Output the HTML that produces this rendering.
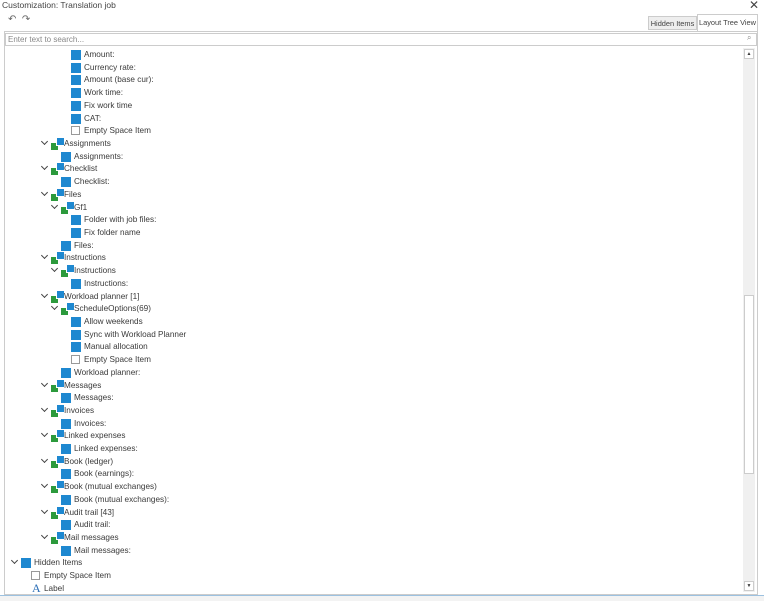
<!DOCTYPE html><html><head><style>
body{margin:0;width:764px;height:600px;background:#fff;font-family:"Liberation Sans",sans-serif;font-size:8.2px;color:#3a3a3a;position:relative;overflow:hidden}
.a{position:absolute;white-space:nowrap}
.r{position:absolute;height:12px;line-height:12px;white-space:nowrap}
.b{position:absolute;width:10px;height:10px;background:#1e88d0;top:1px}
.e{position:absolute;width:9px;height:9px;border:1px solid #999;background:#fff;top:1px;box-sizing:border-box}
.g{position:absolute;width:12px;height:12px;top:0}
.g i{position:absolute;width:7px;height:7px;background:#2c9a3c;left:0;top:5px}
.g s{position:absolute;width:7px;height:7px;background:#1e88d0;left:5px;top:0;border-left:1px solid #fff;border-bottom:1px solid #fff}
.c{position:absolute;top:1px;width:4px;height:4px;border-right:1.2px solid #444;border-bottom:1.2px solid #444;transform:rotate(45deg)}
</style></head><body>
<div class="a" style="left:2px;top:0;font-size:8.5px;color:#444">Customization: Translation job</div>
<div class="a" style="left:749px;top:-2px;font-size:12px;color:#444">✕</div>
<div class="a" style="left:8px;top:14px;font-size:10px;color:#666">↶ &nbsp;↷</div>
<div class="a" style="left:648px;top:16px;width:49px;height:14px;background:#eee;border:1px solid #ccc;box-sizing:border-box;font-size:7.4px;line-height:13px;text-align:center;color:#444;overflow:hidden">Hidden Items</div>
<div class="a" style="left:697px;top:14px;width:61px;height:17px;background:#fff;border:1px solid #ccc;border-bottom:none;box-sizing:border-box;font-size:7.4px;line-height:15px;text-align:center;color:#444;overflow:hidden">Layout Tree View</div>
<div class="a" style="left:4px;top:31px;width:754px;height:564px;border:1px solid #ccc;box-sizing:border-box"></div>
<div class="a" style="left:5px;top:33px;width:752px;height:13px;border:1px solid #ccc;box-sizing:border-box;color:#888;font-size:8px;line-height:11px;padding-left:2px">Enter text to search...</div>
<div class="a" style="left:747px;top:33px;font-size:8px;color:#888">⌕</div>
<div class="a" style="left:743px;top:48px;width:12px;height:544px;background:#f0f0f0"></div>
<div class="a" style="left:744px;top:49px;width:10px;height:10px;border:1px solid #ccc;background:#fff;box-sizing:border-box;font-size:5px;text-align:center;line-height:8px">▲</div>
<div class="a" style="left:744px;top:295px;width:10px;height:179px;border:1px solid #ccc;background:#fff;box-sizing:border-box"></div>
<div class="a" style="left:744px;top:581px;width:10px;height:10px;border:1px solid #ccc;background:#fff;box-sizing:border-box;font-size:5px;text-align:center;line-height:8px">▼</div>
<div class="a" style="left:0;top:595px;width:764px;height:5px;border-top:1px solid #9cc1e0;background:#f3f3f3"></div>
<div id="t"></div>
<script>
var rows=[
["L3","Amount:"],["L3","Currency rate:"],["L3","Amount (base cur):"],["L3","Work time:"],["L3","Fix work time"],["L3","CAT:"],["E3","Empty Space Item"],
["G","Assignments"],["L2","Assignments:"],["G","Checklist"],["L2","Checklist:"],["G","Files"],["S","Gf1"],["L3","Folder with job files:"],["L3","Fix folder name"],["L2","Files:"],
["G","Instructions"],["S","Instructions"],["L3","Instructions:"],["G","Workload planner [1]"],["S","ScheduleOptions(69)"],["L3","Allow weekends"],["L3","Sync with Workload Planner"],["L3","Manual allocation"],["E3","Empty Space Item"],["L2","Workload planner:"],
["G","Messages"],["L2","Messages:"],["G","Invoices"],["L2","Invoices:"],["G","Linked expenses"],["L2","Linked expenses:"],["G","Book (ledger)"],["L2","Book (earnings):"],["G","Book (mutual exchanges)"],["L2","Book (mutual exchanges):"],["G","Audit trail [43]"],["L2","Audit trail:"],["G","Mail messages"],["L2","Mail messages:"],
["H","Hidden Items"],["E0","Empty Space Item"],["A","Label"]];
var h="";
rows.forEach(function(r,i){var y=(49+i*12.71).toFixed(1),t=r[0],ic="",tx;
if(t=="L3"){ic='<div class="b" style="left:71px"></div>';tx=84}
else if(t=="L2"){ic='<div class="b" style="left:61px"></div>';tx=74}
else if(t=="E3"){ic='<div class="e" style="left:71px"></div>';tx=84}
else if(t=="E0"){ic='<div class="e" style="left:31px"></div>';tx=44}
else if(t=="G"){ic='<div class="c" style="left:42px"></div><div class="g" style="left:51px"><i></i><s></s></div>';tx=64}
else if(t=="S"){ic='<div class="c" style="left:52px"></div><div class="g" style="left:61px"><i></i><s></s></div>';tx=74}
else if(t=="H"){ic='<div class="c" style="left:12px"></div><div class="b" style="left:21px"></div>';tx=34}
else if(t=="A"){ic='<div class="a" style="left:32px;top:-1px;font-family:Liberation Serif,serif;font-size:12px;color:#2a6db5">A</div>';tx=44}
h+='<div class="r" style="left:0;top:'+y+'px;width:740px">'+ic+'<span class="a" style="left:'+tx+'px">'+r[1]+'</span></div>';});
document.getElementById("t").innerHTML=h;
</script>
</body></html>
